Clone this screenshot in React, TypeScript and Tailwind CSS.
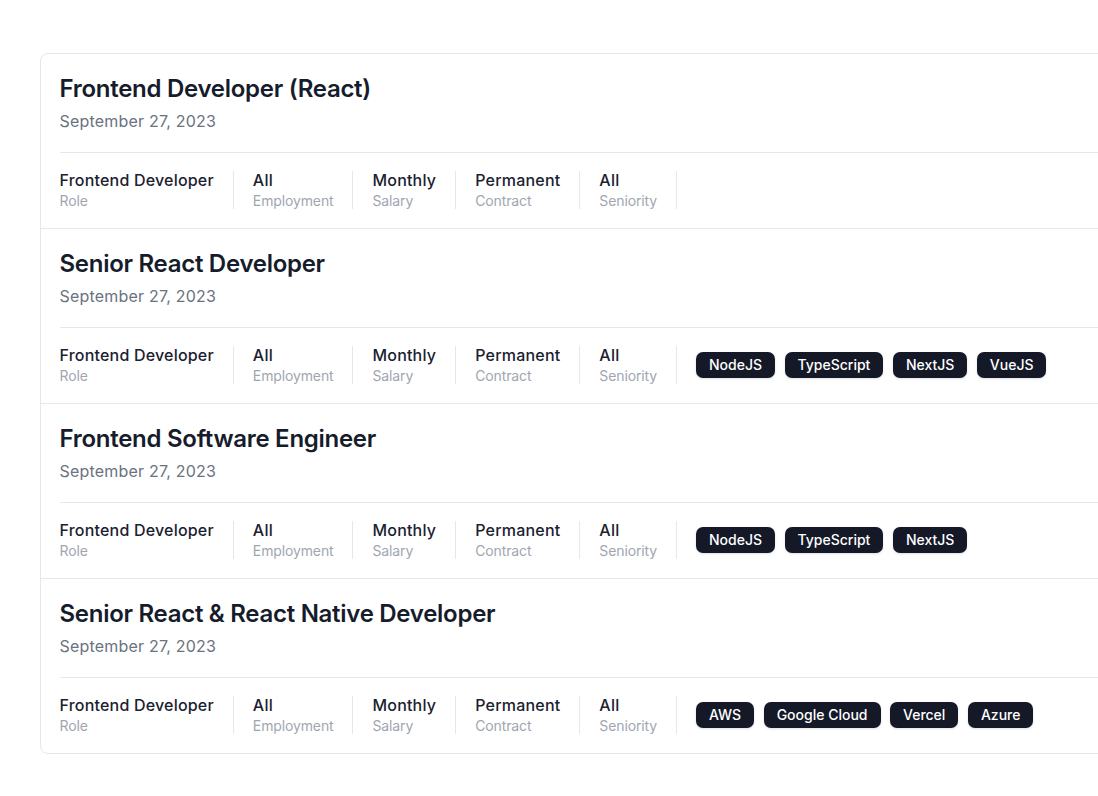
const rows = [
  { title: "Frontend Developer (React)", tags: [] as string[] },
  { title: "Senior React Developer", tags: ["NodeJS", "TypeScript", "NextJS", "VueJS"] },
  { title: "Frontend Software Engineer", tags: ["NodeJS", "TypeScript", "NextJS"] },
  { title: "Senior React & React Native Developer", tags: ["AWS", "Google Cloud", "Vercel", "Azure"] },
];

const meta = [
  ["Frontend Developer", "Role"],
  ["All", "Employment"],
  ["Monthly", "Salary"],
  ["Permanent", "Contract"],
  ["All", "Seniority"],
];

export default function App() {
  return (
    <div className="h-[796px] w-[1098px] overflow-hidden bg-white pl-10 pt-[53px] font-['Inter',sans-serif]">
      <div className="w-[1100px] rounded-lg border border-[#e5e7eb] bg-white">
        {rows.map((row, i) => (
          <div key={row.title} className={i > 0 ? "h-[175px] border-t border-[#e5e7eb] pl-[18.5px]" : "h-[174px] pl-[18.5px]"}>
            <div className="h-[99px] border-b border-[#e5e7eb] pt-[19px]">
              <h2 className="text-2xl leading-8 font-semibold tracking-[-0.28px] text-[#161c2c]">{row.title}</h2>
              <p className="mt-1 text-base leading-6 tracking-[0.2px] text-[#6b7280]">September 27, 2023</p>
            </div>
            <div className="flex items-center pt-[18px]">
              {meta.map(([value, label]) => (
                <div key={label} className="mr-[19px] border-r border-[#e5e7eb] pr-[19px]">
                  <div className="text-base leading-[18px] font-[450] tracking-[0.2px] text-[#1a2130]">{value}</div>
                  <div className="pt-[3px] text-sm leading-[17px] tracking-[-0.13px] text-[#a0a6b1]">{label}</div>
                </div>
              ))}
              <div className="flex gap-[9.5px]">
                {row.tags.map((tag) => (
                  <span key={tag} className="rounded-[7px] bg-[#141827] px-[13px] py-[3px] text-sm leading-5 font-medium text-white shadow-sm">
                    {tag}
                  </span>
                ))}
              </div>
            </div>
          </div>
        ))}
      </div>
    </div>
  );
}
